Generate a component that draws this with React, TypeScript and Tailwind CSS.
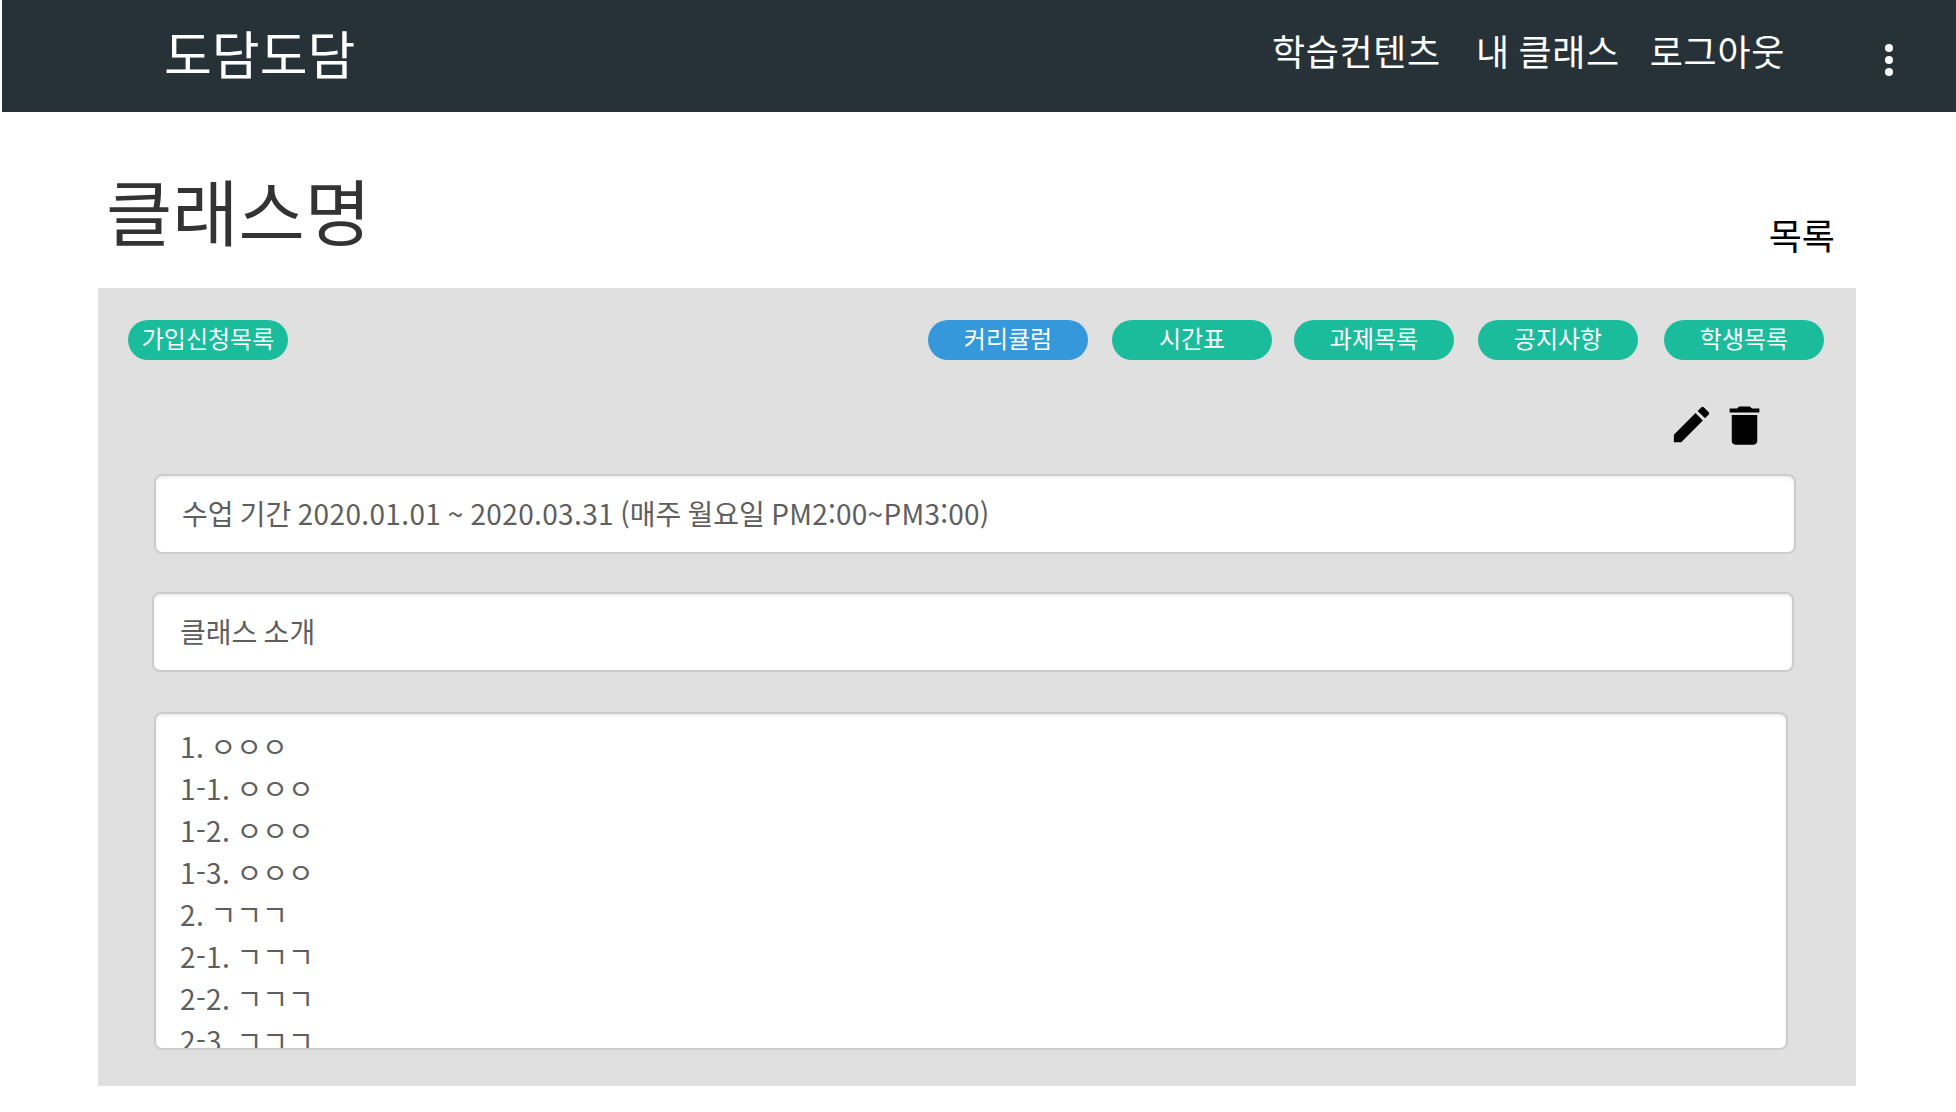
const kr = "font-['Noto_Sans_CJK_KR',sans-serif]";

const tabs = [
  { label: "커리큘럼", tone: "bg-[#3498db]", gap: "ml-auto" },
  { label: "시간표", tone: "bg-[#1abc9c]", gap: "ml-6" },
  { label: "과제목록", tone: "bg-[#1abc9c]", gap: "ml-[22px]" },
  { label: "공지사항", tone: "bg-[#1abc9c]", gap: "ml-6" },
  { label: "학생목록", tone: "bg-[#1abc9c]", gap: "ml-[26px]" },
];

const outline = [
  { no: "1.", text: "ㅇㅇㅇ" },
  { no: "1-1.", text: "ㅇㅇㅇ" },
  { no: "1-2.", text: "ㅇㅇㅇ" },
  { no: "1-3.", text: "ㅇㅇㅇ" },
  { no: "2.", text: "ㄱㄱㄱ" },
  { no: "2-1.", text: "ㄱㄱㄱ" },
  { no: "2-2.", text: "ㄱㄱㄱ" },
  { no: "2-3.", text: "ㄱㄱㄱ" },
];

const field =
  "border-2 border-[#cccccc] rounded-lg bg-white text-[28px] text-[#5e5e5e] [word-spacing:-1.5px] shadow-[inset_0_2px_3px_rgba(0,0,0,0.075)]";

function Pill({ label, tone, gap }: { label: string; tone: string; gap: string }) {
  return (
    <button
      className={`flex h-10 w-40 items-center justify-center rounded-full pb-[4px] text-2xl leading-none whitespace-nowrap text-white ${tone} ${gap}`}
    >
      {label}
    </button>
  );
}

export default function App() {
  return (
    <div className={`h-[1112px] w-[1956px] overflow-hidden bg-white ${kr}`} lang="ko">
      <header className="ml-0.5 flex h-28 items-start bg-[#263238] pl-[162px] text-white">
        <div className="mt-[15px] text-[52px] leading-[76px]">도담도담</div>
        <nav className="mt-[24px] mr-[80px] ml-auto flex text-4xl leading-[52px] tracking-[0.67px] [word-spacing:-2px]">
          <a className="mr-[35px]">학습컨텐츠</a>
          <a className="mr-[30px]">내 클래스</a>
          <a>로그아웃</a>
        </nav>
        <svg className="mt-[36px] mr-[43px] size-12" viewBox="0 0 24 24" fill="currentColor">
          <circle cx="12" cy="6" r="2" />
          <circle cx="12" cy="12" r="2" />
          <circle cx="12" cy="18" r="2" />
        </svg>
      </header>

      <div className="flex h-44 justify-between pr-[121px] pl-[106px]">
        <h1 className="mt-[45px] text-7xl leading-[104px] text-[#333333]">클래스명</h1>
        <a className="mt-[96px] text-4xl leading-[52px] text-black">목록</a>
      </div>

      <main className="ml-[98px] h-[798px] w-[1758px] bg-[#e0e0e0] pt-8">
        <div className="flex pr-8 pl-[30px]">
          <Pill label="가입신청목록" tone="bg-[#1abc9c]" gap="" />
          {tabs.map((t) => (
            <Pill key={t.label} {...t} />
          ))}
        </div>

        <div className="mt-10 flex h-[74px] justify-end pr-[86px] text-black">
          <svg className="mt-px size-[47px]" viewBox="0 0 24 24" fill="currentColor">
            <path d="M3 17.25V21h3.75L17.81 9.94l-3.75-3.75L3 17.25zM20.71 7.04a1 1 0 0 0 0-1.41l-2.34-2.34a1 1 0 0 0-1.41 0l-1.83 1.83 3.75 3.75 1.83-1.83z" />
          </svg>
          <svg className="ml-1 size-[51px]" viewBox="0 0 24 24" fill="currentColor">
            <path d="M6 19.3c0 1 .7 1.7 1.7 1.7h8.600c1 0 1.700-.7 1.700-1.700V7H6v12.300zM19 4h-3.500c-.4-.7-.9-1-1.500-1h-4c-.6 0-1.100.3-1.500 1H5v1.900h14V4z" />
          </svg>
        </div>

        <div className={`ml-14 flex h-20 w-[1642px] items-center pb-[3px] pl-[26px] ${field}`}>
          <p>
            수업 기간 <span className="tracking-[0.35px]">2020.01.01 ~ 2020.03.31</span> (매주 월요일{" "}
            <span className="tracking-[0.25px]">PM2:00~PM3:00)</span>
          </p>
        </div>
        <div className={`mt-[38px] ml-[54px] flex h-20 w-[1642px] items-center pb-[3px] pl-[26px] ${field}`}>
          클래스 소개
        </div>
        <div className={`mt-10 ml-14 h-[338px] w-[1634px] overflow-hidden pt-[11px] pl-6 leading-[42px] ${field}`}>
          {outline.map((line) => (
            <p key={line.no}>
              <span className="tracking-[0.4px]">{line.no}</span> {line.text}
            </p>
          ))}
        </div>
      </main>
    </div>
  );
}
